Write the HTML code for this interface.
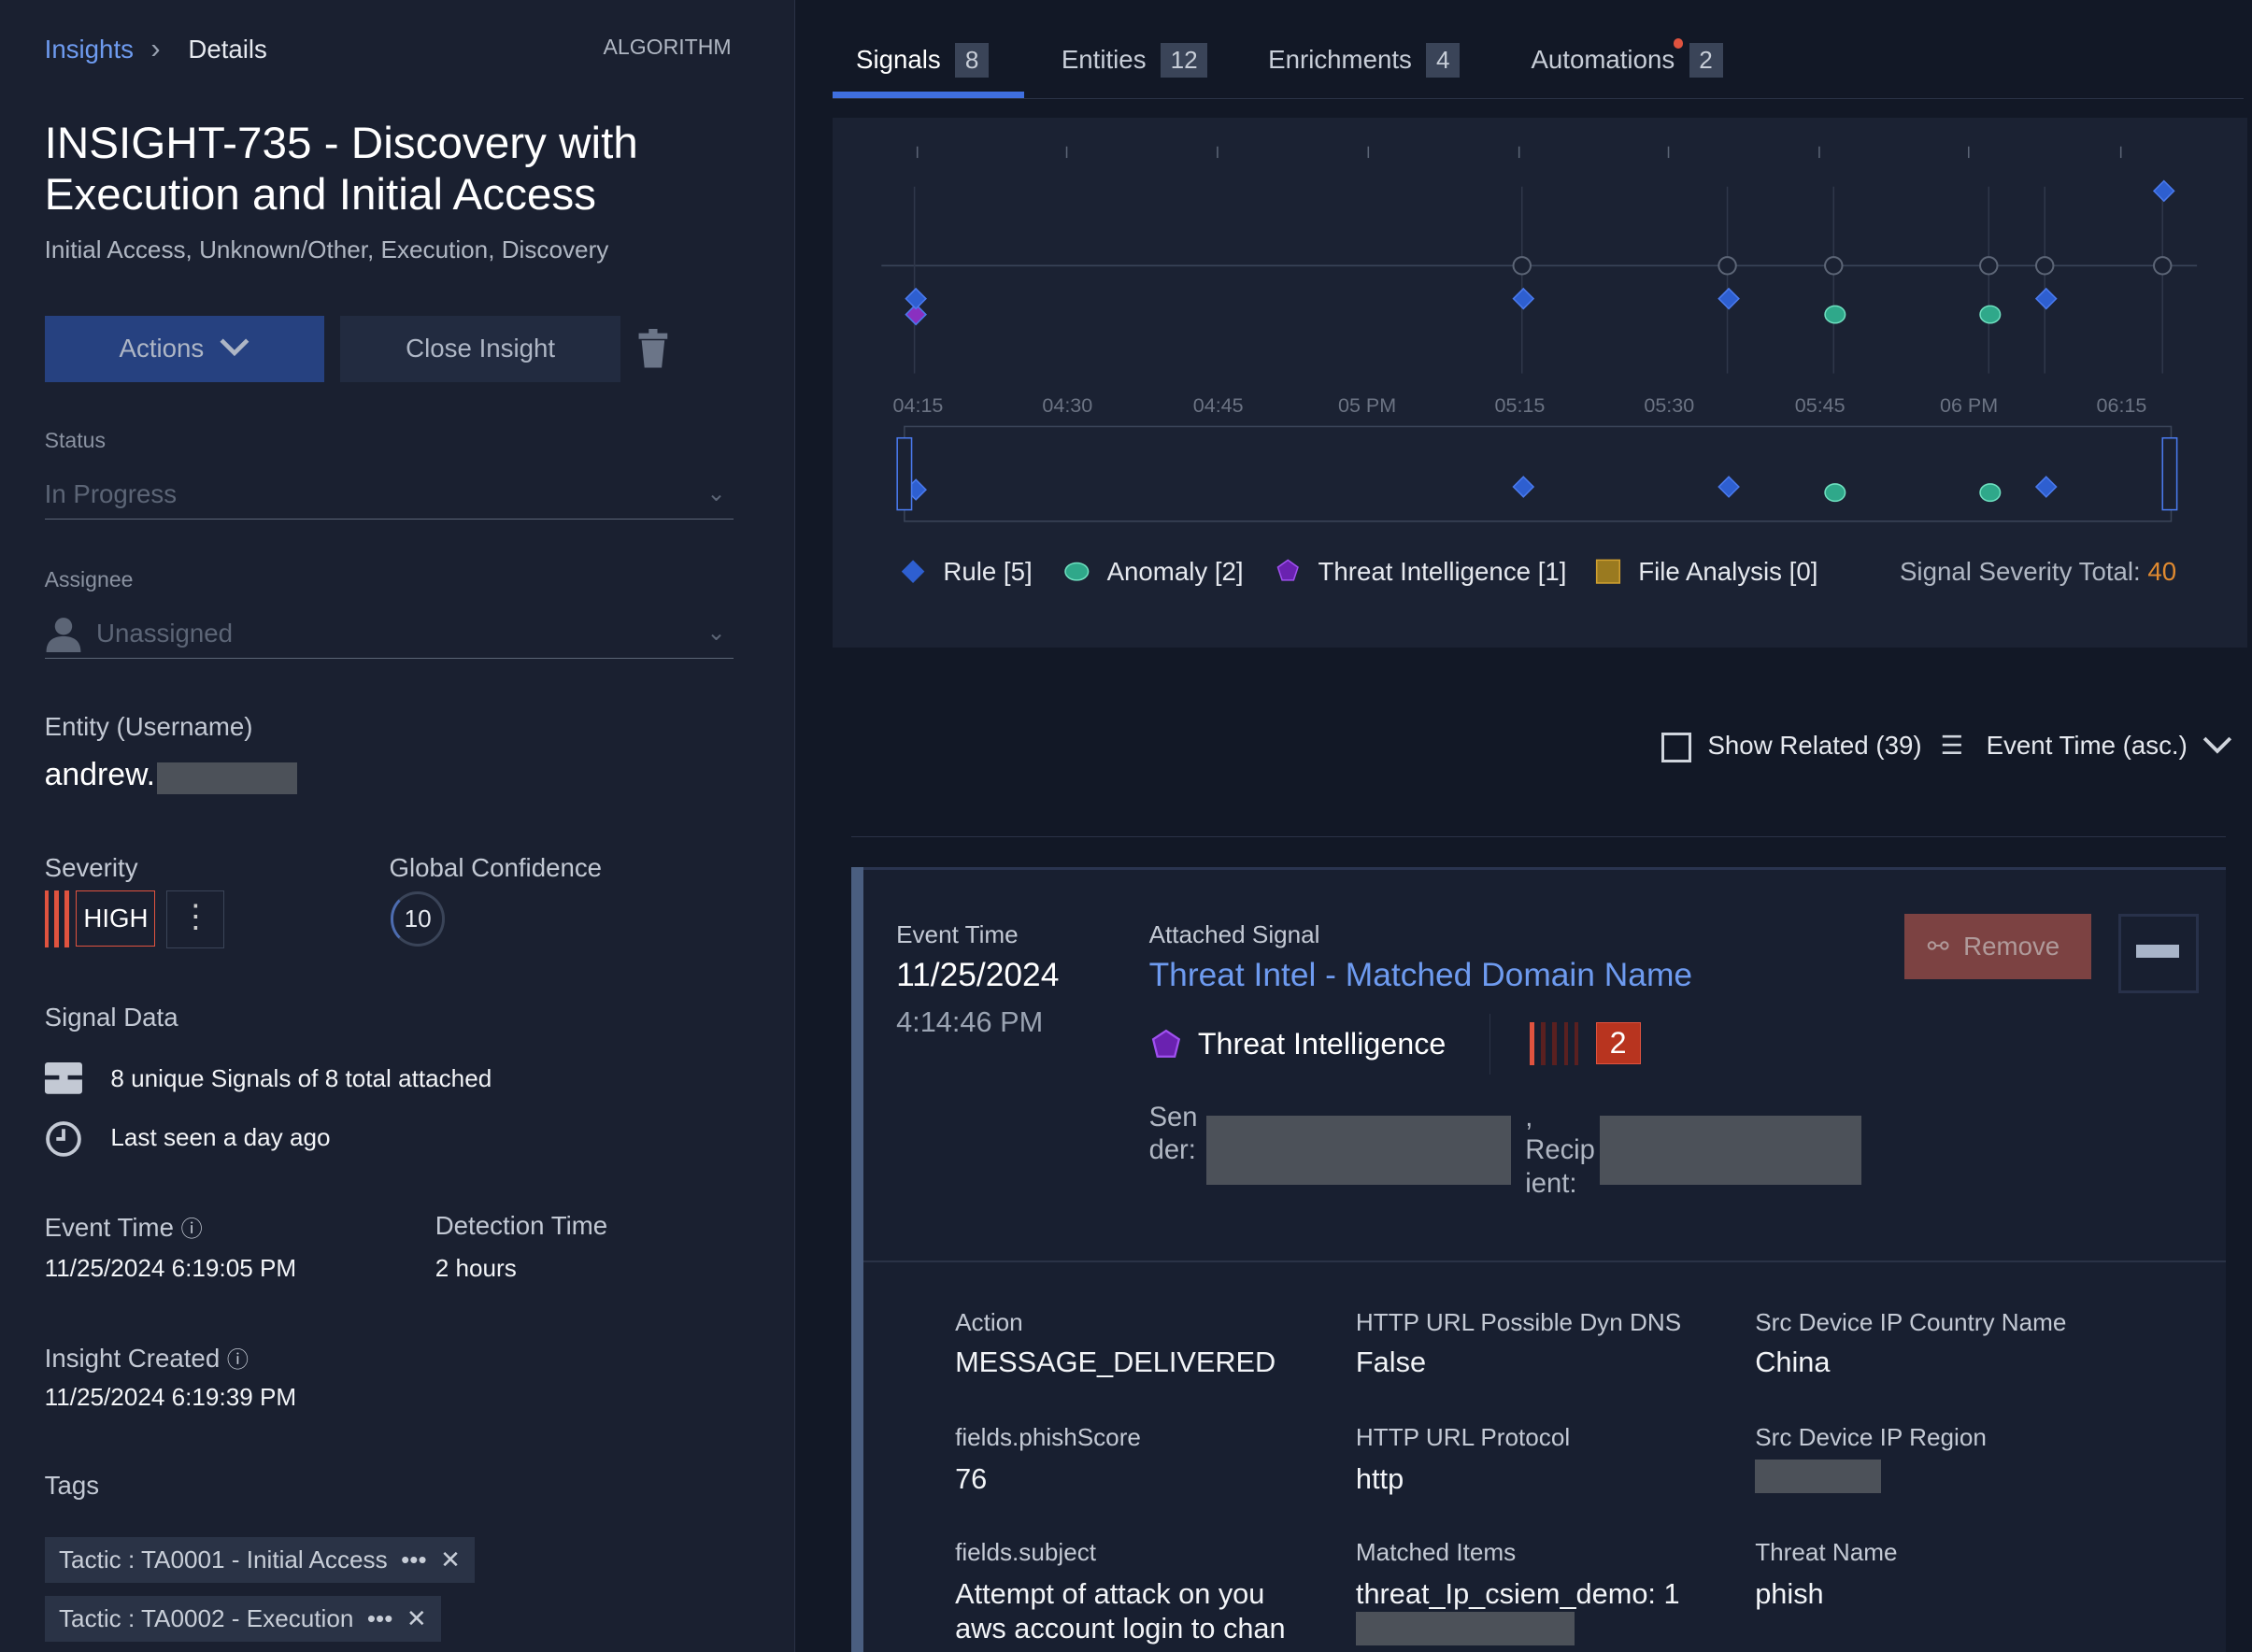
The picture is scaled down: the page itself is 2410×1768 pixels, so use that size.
<!DOCTYPE html>
<html><head><meta charset="utf-8"><style>
html,body{margin:0;padding:0;background:#121826;overflow:hidden}
#r{zoom:1.537;width:1568px;height:1150px;position:relative;font-family:"Liberation Sans",sans-serif;color:#e6e9ef}
.a{position:absolute;white-space:nowrap}
#left{position:absolute;left:0;top:0;width:553px;height:1150px;background:#1a2030;border-right:1px solid #2a3246}
.lbl{color:#c3c9d4;font-size:17px}
.val{color:#f2f4f7;font-size:18px}
.dim{color:#6b7383}
.tab{font-size:18px;color:#c8ced8}
.badge{display:inline-block;background:#3a4458;color:#c8ced8;padding:2px 7px;margin-left:10px;font-size:17px}
.tag{position:absolute;background:#2a3346;color:#c8ced8;font-size:17px;padding:6px 10px;height:20px}
.blur{position:absolute;background:#4c5159}
</style></head><body><div id="r">
<div id="left">
<div class="a" style="left:31px;top:24px;font-size:18px;color:#6e9bf0">Insights</div>
<div class="a" style="left:105px;top:22px;font-size:20px;color:#9aa3b2">›</div>
<div class="a" style="left:131px;top:24px;font-size:18px">Details</div>
<div class="a" style="left:420px;top:24px;font-size:15px;color:#b0b7c3">ALGORITHM</div>
<div class="a" style="left:31px;top:82px;font-size:31px;line-height:36px;color:#fff;white-space:normal;width:480px">INSIGHT-735 - Discovery with Execution and Initial Access</div>
<div class="a" style="left:31px;top:164px;font-size:17px;color:#b0b7c3">Initial Access, Unknown/Other, Execution, Discovery</div>
<div class="a" style="left:31px;top:220px;width:195px;height:46px;background:#264180;color:#aeb6c5;font-size:18px;text-align:center;line-height:46px">Actions&nbsp; <svg width="22" height="14" viewBox="0 0 22 14"><path d="M2 2l9 9 9-9" stroke="#aeb6c5" stroke-width="3" fill="none"/></svg></div>
<div class="a" style="left:237px;top:220px;width:195px;height:46px;background:#222b40;color:#aeb6c5;font-size:18px;text-align:center;line-height:46px">Close Insight</div>
<svg class="a" style="left:444px;top:229px" width="22" height="28" viewBox="0 0 22 28"><rect x="1" y="3" width="20" height="4" fill="#6b7588"/><rect x="8" y="0" width="6" height="4" fill="#6b7588"/><path d="M3 8h16l-2 19H5z" fill="#6b7588"/></svg>
<div class="a lbl" style="left:31px;top:298px;font-size:15px;color:#8a92a1">Status</div>
<div class="a" style="left:31px;top:334px;font-size:18px;color:#5c6576">In Progress</div>
<div class="a" style="left:492px;top:334px;color:#5c6576">⌄</div>
<div class="a" style="left:31px;top:361px;width:480px;height:1px;background:#5c6576"></div>
<div class="a lbl" style="left:31px;top:395px;font-size:15px;color:#8a92a1">Assignee</div>
<svg class="a" style="left:31px;top:428px" width="26" height="26" viewBox="0 0 26 26"><circle cx="13" cy="8" r="6" fill="#5c6576"/><path d="M1 26c0-8 5-11 12-11s12 3 12 11z" fill="#5c6576"/></svg>
<div class="a" style="left:67px;top:431px;font-size:18px;color:#5c6576">Unassigned</div>
<div class="a" style="left:492px;top:431px;color:#5c6576">⌄</div>
<div class="a" style="left:31px;top:458px;width:480px;height:1px;background:#5c6576"></div>
<div class="a lbl" style="left:31px;top:496px;font-size:18px">Entity (Username)</div>
<div class="a" style="left:31px;top:527px;font-size:22px;color:#fff">andrew.</div>
<div class="blur" style="left:109px;top:531px;width:98px;height:22px"></div>
<div class="a lbl" style="left:31px;top:594px;font-size:18px">Severity</div>
<div class="a" style="left:31px;top:620px;width:3px;height:40px;background:#e0533f"></div>
<div class="a" style="left:38px;top:620px;width:3px;height:40px;background:#e0533f"></div>
<div class="a" style="left:45px;top:620px;width:3px;height:40px;background:#e0533f"></div>
<div class="a" style="left:53px;top:620px;width:54px;height:38px;border:1px solid #e0533f;font-size:18px;text-align:center;line-height:38px;color:#fff">HIGH</div>
<div class="a" style="left:116px;top:620px;width:39px;height:39px;border:1px solid #3a4458;text-align:center;font-size:22px;line-height:36px;color:#ccc">⋮</div>
<div class="a lbl" style="left:271px;top:594px;font-size:18px">Global Confidence</div>
<div class="a" style="left:272px;top:621px;width:34px;height:34px;border:2px solid #3a4458;border-radius:50%;border-left-color:#4d6cb0;text-align:center;line-height:34px;font-size:17px">10</div>
<div class="a lbl" style="left:31px;top:698px;font-size:18px">Signal Data</div>
<svg class="a" style="left:31px;top:740px" width="26" height="22" viewBox="0 0 26 22"><rect x="0" y="0" width="26" height="22" rx="2" fill="#c3c9d4"/><rect x="0" y="9" width="26" height="3" fill="#1a2030"/><rect x="10" y="7" width="6" height="6" fill="#c3c9d4"/></svg>
<div class="a val" style="left:77px;top:741px;font-size:17px">8 unique Signals of 8 total attached</div>
<svg class="a" style="left:31px;top:780px" width="26" height="26" viewBox="0 0 26 26"><circle cx="13" cy="13" r="11" stroke="#c3c9d4" stroke-width="2.5" fill="none"/><path d="M13 6v7h-5" stroke="#c3c9d4" stroke-width="2.5" fill="none"/></svg>
<div class="a val" style="left:77px;top:782px;font-size:17px">Last seen a day ago</div>
<div class="a lbl" style="left:31px;top:843px;font-size:18px">Event Time <span style="font-size:15px">ⓘ</span></div>
<div class="a val" style="left:31px;top:873px;font-size:17px">11/25/2024 6:19:05 PM</div>
<div class="a lbl" style="left:303px;top:843px;font-size:18px">Detection Time</div>
<div class="a val" style="left:303px;top:873px;font-size:17px">2 hours</div>
<div class="a lbl" style="left:31px;top:934px;font-size:18px">Insight Created <span style="font-size:15px">ⓘ</span></div>
<div class="a val" style="left:31px;top:963px;font-size:17px">11/25/2024 6:19:39 PM</div>
<div class="a lbl" style="left:31px;top:1024px;font-size:18px">Tags</div>
<div class="tag" style="left:31px;top:1070px">Tactic : TA0001 - Initial Access &nbsp;••• &nbsp;✕</div>
<div class="tag" style="left:31px;top:1111px">Tactic : TA0002 - Execution &nbsp;••• &nbsp;✕</div>
</div>

<div class="a tab" style="left:596px;top:30px;color:#fff">Signals<span class="badge">8</span></div>
<div class="a" style="left:580px;top:64px;width:133px;height:4px;background:#3f6fe0"></div>
<div class="a tab" style="left:739px;top:30px">Entities<span class="badge">12</span></div>
<div class="a tab" style="left:883px;top:30px">Enrichments<span class="badge">4</span></div>
<div class="a tab" style="left:1066px;top:30px">Automations<span class="badge">2</span></div>
<div class="a" style="left:1165px;top:27px;width:7px;height:7px;border-radius:50%;background:#e0533f"></div>
<div class="a" style="left:580px;top:68px;width:982px;height:1px;background:#2a3246"></div>

<div class="a" style="left:580px;top:82px;width:985px;height:369px;background:#1b2233"></div>
<svg class="a" style="left:580px;top:82px" width="985" height="369" viewBox="580 82 985 369" font-family="Liberation Sans" font-size="14" fill="#6b7383">
<g stroke="#5c6576"><line x1="639" y1="102" x2="639" y2="110"/><line x1="743" y1="102" x2="743" y2="110"/><line x1="848" y1="102" x2="848" y2="110"/><line x1="953" y1="102" x2="953" y2="110"/><line x1="1058" y1="102" x2="1058" y2="110"/><line x1="1162" y1="102" x2="1162" y2="110"/><line x1="1267" y1="102" x2="1267" y2="110"/><line x1="1371" y1="102" x2="1371" y2="110"/><line x1="1477" y1="102" x2="1477" y2="110"/></g>
<line x1="614" y1="185" x2="1530" y2="185" stroke="#3a4458"/>
<g stroke="#2f374a"><line x1="637" y1="130" x2="637" y2="260"/><line x1="1060" y1="130" x2="1060" y2="260"/><line x1="1203" y1="130" x2="1203" y2="260"/><line x1="1277" y1="130" x2="1277" y2="260"/><line x1="1385" y1="130" x2="1385" y2="260"/><line x1="1424" y1="130" x2="1424" y2="260"/><line x1="1506" y1="130" x2="1506" y2="260"/></g>
<g fill="#1b2233" stroke="#5c6576" stroke-width="1.3"><circle cx="1060" cy="185" r="6"/><circle cx="1203" cy="185" r="6"/><circle cx="1277" cy="185" r="6"/><circle cx="1385" cy="185" r="6"/><circle cx="1424" cy="185" r="6"/><circle cx="1506" cy="185" r="6"/></g>
<g fill="#2e5fd0" stroke="#4a7aee"><path d="M638 212l7 7-7 7-7-7z" fill="#8a30c0"/><path d="M638 201l7 7-7 7-7-7z"/><path d="M1061 201l7 7-7 7-7-7z"/><path d="M1204 201l7 7-7 7-7-7z"/><path d="M1425 201l7 7-7 7-7-7z"/><path d="M1507 126l7 7-7 7-7-7z"/>
<path d="M1061 332l7 7-7 7-7-7z"/><path d="M1204 332l7 7-7 7-7-7z"/><path d="M1425 332l7 7-7 7-7-7z"/><path d="M638 334l7 7-7 7-7-7z"/></g>
<g fill="#2fa88a" stroke="#6fe0c0"><ellipse cx="1278" cy="219" rx="7" ry="6"/><ellipse cx="1386" cy="219" rx="7" ry="6"/><ellipse cx="1278" cy="343" rx="7" ry="6"/><ellipse cx="1386" cy="343" rx="7" ry="6"/></g>
<text x="622" y="287">04:15</text><text x="726" y="287">04:30</text><text x="831" y="287">04:45</text><text x="932" y="287">05 PM</text><text x="1041" y="287">05:15</text><text x="1145" y="287">05:30</text><text x="1250" y="287">05:45</text><text x="1351" y="287">06 PM</text><text x="1460" y="287">06:15</text>
<rect x="630" y="297" width="882" height="66" fill="none" stroke="#3a4458"/>
<rect x="625" y="305" width="10" height="50" fill="#1b2233" stroke="#4a7aee"/><rect x="1506" y="305" width="10" height="50" fill="#1b2233" stroke="#4a7aee"/>
<path d="M636 390l8 8-8 8-8-8z" fill="#2e5fd0"/><text x="657" y="404" fill="#e6e9ef" font-size="18">Rule [5]</text>
<ellipse cx="750" cy="398" rx="8" ry="6" fill="#2fa88a" stroke="#6fe0c0"/><text x="771" y="404" fill="#e6e9ef" font-size="18">Anomaly [2]</text>
<path d="M897 390l7 5-3 9h-8l-3-9z" fill="#6a22b0" stroke="#a050f0"/><text x="918" y="404" fill="#e6e9ef" font-size="18">Threat Intelligence [1]</text>
<rect x="1112" y="390" width="16" height="16" fill="#9a7a20" stroke="#d0a030"/><text x="1141" y="404" fill="#e6e9ef" font-size="18">File Analysis [0]</text>
<text x="1323" y="404" fill="#b0b7c3" font-size="18">Signal Severity Total: <tspan fill="#e08a30">40</tspan></text>
</svg>

<div class="a" style="left:1157px;top:510px;width:17px;height:17px;border:2px solid #d0d5dd"></div>
<div class="a" style="left:1189px;top:509px;font-size:18px">Show Related (39)</div>
<div class="a" style="left:1351px;top:508px;font-size:18px;color:#d0d5dd">☰</div>
<div class="a" style="left:1383px;top:509px;font-size:18px">Event Time (asc.)</div>
<svg class="a" style="left:1533px;top:512px" width="22" height="14"><path d="M2 2l9 9 9-9" stroke="#d0d5dd" stroke-width="2.5" fill="none"/></svg>
<div class="a" style="left:593px;top:582px;width:957px;height:1px;background:#2a3246"></div>

<div class="a" style="left:593px;top:604px;width:957px;height:546px;background:#181f30;border-top:2px solid #2a3450"></div>
<div class="a" style="left:593px;top:604px;width:8px;height:546px;background:#4a5e80"></div>
<div class="a" style="left:601px;top:878px;width:949px;height:1px;background:#2a3246"></div>
<div class="a lbl" style="left:624px;top:641px">Event Time</div>
<div class="a" style="left:624px;top:666px;font-size:23px;color:#fff">11/25/2024</div>
<div class="a" style="left:624px;top:700px;font-size:20px;color:#9aa3b2">4:14:46 PM</div>
<div class="a lbl" style="left:800px;top:641px">Attached Signal</div>
<div class="a" style="left:800px;top:666px;font-size:23px;color:#6e9bf0">Threat Intel - Matched Domain Name</div>
<svg class="a" style="left:801px;top:716px" width="22" height="22"><path d="M11 2l9 6-3 12H5L2 8z" fill="#6a22b0" stroke="#a050f0" stroke-width="1.5"/></svg>
<div class="a" style="left:834px;top:715px;font-size:21px;color:#fff">Threat Intelligence</div>
<div class="a" style="left:1037px;top:706px;width:1px;height:42px;background:#2a3246"></div>
<div class="a" style="left:1065px;top:712px;width:3px;height:30px;background:#e0533f"></div>
<div class="a" style="left:1073px;top:712px;width:3px;height:30px;background:#5a2020"></div>
<div class="a" style="left:1081px;top:712px;width:3px;height:30px;background:#5a2020"></div>
<div class="a" style="left:1089px;top:712px;width:3px;height:30px;background:#5a2020"></div>
<div class="a" style="left:1096px;top:712px;width:3px;height:30px;background:#5a2020"></div>
<div class="a" style="left:1111px;top:712px;width:30px;height:28px;border:1px solid #e0533f;background:#b8341f;text-align:center;font-size:21px;line-height:28px;color:#fff">2</div>
<div class="a" style="left:800px;top:767px;font-size:19px;color:#b0b7c3;line-height:23px">Sen<br>der:</div>
<div class="blur" style="left:840px;top:777px;width:212px;height:48px"></div>
<div class="a" style="left:1062px;top:767px;font-size:19px;color:#b0b7c3;line-height:23px">,<br>Recip<br>ient:</div>
<div class="blur" style="left:1114px;top:777px;width:182px;height:48px"></div>
<div class="a" style="left:1326px;top:636px;width:130px;height:46px;background:#7c4242;color:#b09a9a;font-size:18px;line-height:46px"><span style="margin-left:16px">⚯</span>&nbsp; Remove</div>
<div class="a" style="left:1475px;top:636px;width:52px;height:52px;border:2px solid #28314a"></div>
<div class="a" style="left:1487px;top:658px;width:30px;height:9px;background:#a8b4c8"></div>

<div class="a lbl" style="left:665px;top:911px">Action</div>
<div class="a val" style="left:665px;top:937px;font-size:20px">MESSAGE_DELIVERED</div>
<div class="a lbl" style="left:944px;top:911px">HTTP URL Possible Dyn DNS</div>
<div class="a val" style="left:944px;top:937px;font-size:20px">False</div>
<div class="a lbl" style="left:1222px;top:911px">Src Device IP Country Name</div>
<div class="a val" style="left:1222px;top:937px;font-size:20px">China</div>
<div class="a lbl" style="left:665px;top:991px">fields.phishScore</div>
<div class="a val" style="left:665px;top:1018px;font-size:20px">76</div>
<div class="a lbl" style="left:944px;top:991px">HTTP URL Protocol</div>
<div class="a val" style="left:944px;top:1018px;font-size:20px">http</div>
<div class="a lbl" style="left:1222px;top:991px">Src Device IP Region</div>
<div class="blur" style="left:1222px;top:1016px;width:88px;height:24px"></div>
<div class="a lbl" style="left:665px;top:1071px">fields.subject</div>
<div class="a val" style="left:665px;top:1098px;font-size:20px;line-height:24px">Attempt of attack on you<br>aws account login to chan</div>
<div class="a lbl" style="left:944px;top:1071px">Matched Items</div>
<div class="a val" style="left:944px;top:1098px;font-size:20px">threat_Ip_csiem_demo: 1</div>
<div class="blur" style="left:944px;top:1122px;width:152px;height:24px"></div>
<div class="a lbl" style="left:1222px;top:1071px">Threat Name</div>
<div class="a val" style="left:1222px;top:1098px;font-size:20px">phish</div>
</div></body></html>
